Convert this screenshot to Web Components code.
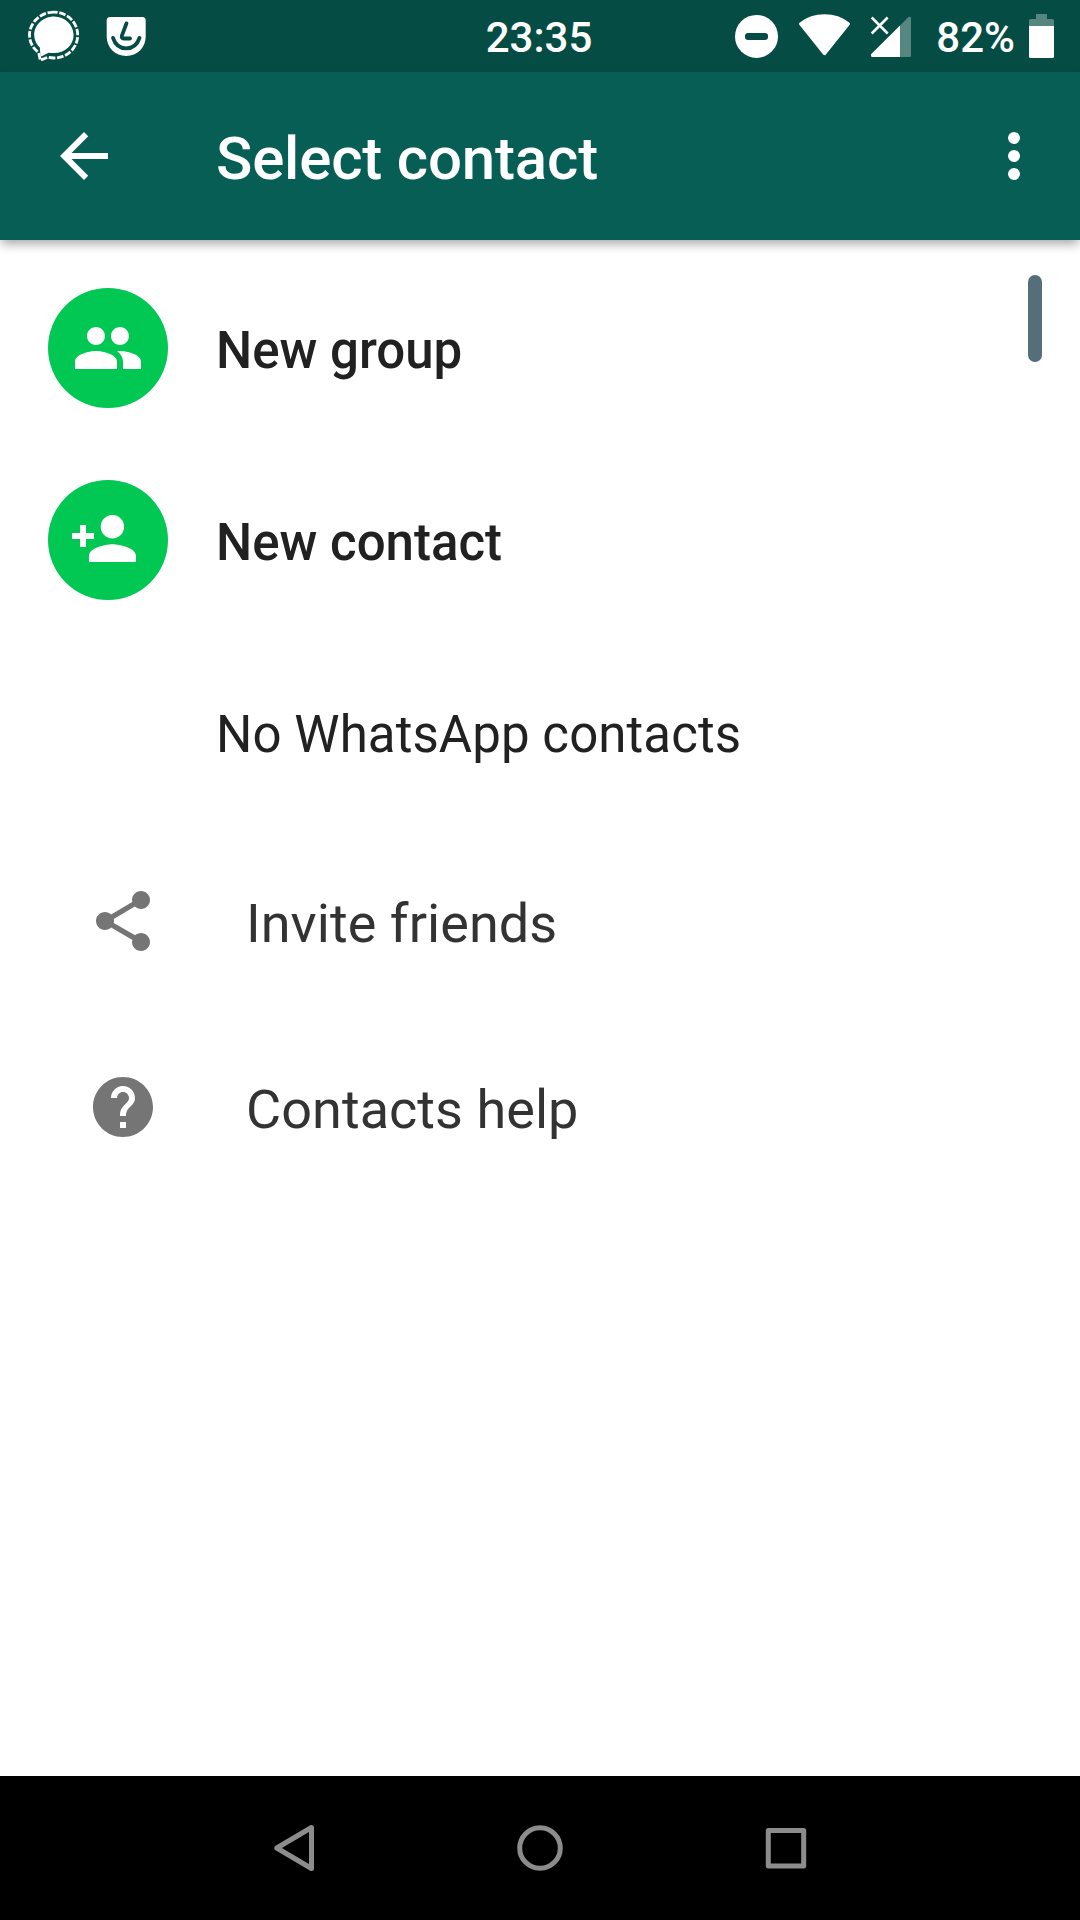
<!DOCTYPE html>
<html lang="en">
<head>
<meta charset="utf-8">
<title>Select contact</title>
<style>
html, body { margin: 0; padding: 0; background: #fff; }
body { font-family: Roboto, "Noto Sans", sans-serif; width: 1080px; height: 1920px; overflow: hidden; }
</style>
</head>
<body>
<phone-screen>
  <status-bar slot="status" time="23:35" battery="82%"></status-bar>
  <app-bar slot="appbar">Select contact</app-bar>
  <contact-action icon="group">New group</contact-action>
  <contact-action icon="person-add">New contact</contact-action>
  <contact-action plain>No WhatsApp contacts</contact-action>
  <link-row icon="share">Invite friends</link-row>
  <link-row icon="help">Contacts help</link-row>
  <nav-bar slot="nav"></nav-bar>
</phone-screen>
<script>
const define = (name, html) => customElements.define(name, class extends HTMLElement {
  connectedCallback() {
    if (this.shadowRoot) return;
    const t = document.createElement('template');
    t.innerHTML = typeof html === 'function' ? html(this) : html;
    this.attachShadow({ mode: 'open' }).appendChild(t.content.cloneNode(true));
  }
});

define('phone-screen', `
<style>
:host { display: flex; flex-direction: column; width: 1080px; height: 1920px; background: #fff; }
main { flex: 1; position: relative; padding-top: 12px; box-sizing: border-box; }
.thumb { position: absolute; top: 35px; right: 38px; width: 14px; height: 87px; border-radius: 7px; background: #546e7a; }
</style>
<slot name="status"></slot>
<slot name="appbar"></slot>
<main><slot></slot><div class="thumb"></div></main>
<slot name="nav"></slot>`);

define('status-bar', el => `
<style>
:host { display: grid; grid-template-columns: 1fr auto 1fr; height: 72px; background: #054d44; color: #fff; font-size: 42px; font-weight: 500; }
.side { display: flex; align-items: flex-start; }
.right { justify-content: flex-end; }
svg { display: block; flex: none; }
.t { line-height: 72px; padding-top: 1.5px; height: 70px; white-space: nowrap; }
.time { padding-right: 2px; }
.pct { margin-left: 23px; margin-right: 14px; }
</style>
<div class="side">
  <svg width="160" height="72" viewBox="0 -0.7 160 72">
    <path fill="#fff" d="M54 15.700c-11 0-19.800 8.300-19.800 18.600 0 5.300 2.300 9.400 5.600 12.600.5 2.900.2 5.500 .9 8.900 3-.9 5-2.500 7.900-3.700 1.800.2 3.600.3 5.400.3 11 0 19.600-8 19.600-18.100S65 15.700 54 15.700z"/>
    <path fill="none" stroke="#fff" stroke-width="2.800" stroke-dasharray="6.600 1.700" d="M51 11.600a24 23.200 0 0 1 3-.2c13.200 0 23.700 10.300 23.700 23S67.200 57.300 54 57.300c-2.200 0-4.300-.2-6.200-.8L40.200 59.500 38.800 51.900C33 47.700 29.500 41.500 29.500 34.400 29.500 22.800 39 13 51 11.600"/>
    <path fill="#fff" d="M110 16.300h32.400c2.200 0 3.300 1.300 3.300 3.300v16.200c0 11-8.500 19.500-19.500 19.500s-19.500-8.500-19.500-19.500V19.600c0-2 1.100-3.300 3.300-3.300z"/>
    <path fill="none" stroke="#054d44" stroke-width="3.800" stroke-linecap="round" stroke-linejoin="round" d="M126.500 22.700l-4.600 12.300c-.5 1.800.2 2.800 1.800 2.800h6.300M113 37.200c2.200 7 7 10.500 13.200 10.500s11-3.500 13.300-10.500"/>
  </svg>
</div>
<div class="t time">${el.getAttribute('time')}</div>
<div class="side right">
  <svg width="178" height="72" viewBox="735 0 178 72">
    <circle cx="756.500" cy="36.400" r="21.500" fill="#fff"/>
    <rect x="745" y="33" width="23" height="7" rx="3" fill="#054d44"/>
    <path fill="#fff" stroke="#fff" stroke-width="3" stroke-linejoin="round" d="M800.500 23.800C814 13 835 13 848.500 23.800L824.500 53.700z"/>
    <path fill="#fff" fill-opacity=".32" d="M900 25.500l8.200-8.200c1.200-1 2.800-.5 2.800 1.200V55.500a1.500 1.500 0 0 1-1.500 1.500H900z"/>
    <path fill="#fff" d="M900 25.500V57H872.500a1.500 1.500 0 0 1-1.500-1.500v-1.300z"/>
    <path stroke="#fff" stroke-width="2.500" d="M871.700 17.500l16 16M887.700 17.500l-16 16"/>
  </svg>
  <div class="t pct">${el.getAttribute('battery')}</div>
  <svg width="51" height="72" viewBox="1029 0 51 72">
    <path fill="#fff" fill-opacity=".32" d="M1029 26v-5.500a1.500 1.500 0 0 1 1.500-1.500h5.500v-5h11v5h5.500a1.500 1.500 0 0 1 1.500 1.500V26z"/>
    <path fill="#fff" d="M1029 26h25v30.500a1.500 1.500 0 0 1-1.500 1.500h-22a1.500 1.500 0 0 1-1.500-1.500z"/>
  </svg>
</div>`);

define('app-bar', `
<style>
:host { display: flex; align-items: center; box-sizing: border-box; height: 168px; padding: 0 30px 0 48px; background: #075e54; color: #fff; position: relative; z-index: 1; box-shadow: 0 5px 10px -1px rgba(0,0,0,.34); }
svg { display: block; width: 72px; height: 72px; fill: #fff; flex: none; }
h1 { flex: 1; margin: 0 0 0 96px; padding-top: 5px; font-size: 60px; font-weight: 500; letter-spacing: -.18px; line-height: 72px; white-space: nowrap; }
</style>
<svg viewBox="0 0 24 24"><path d="M20 11H7.830l5.590-5.590L12 4l-8 8 8 8 1.410-1.410L7.830 13H20v-2z"/></svg>
<h1><slot></slot></h1>
<svg viewBox="0 0 24 24"><circle cx="12" cy="6" r="2"/><circle cx="12" cy="12" r="2"/><circle cx="12" cy="18" r="2"/></svg>`);

const actionIcons = {
  'group': '<g transform="translate(24 24) scale(3)"><path d="M16 11c1.660 0 2.990-1.340 2.990-3S17.660 5 16 5c-1.660 0-3 1.340-3 3s1.340 3 3 3zm-8 0c1.660 0 2.990-1.340 2.990-3S9.660 5 8 5C6.340 5 5 6.340 5 8s1.340 3 3 3zm0 2c-2.330 0-7 1.170-7 3.500V19h14v-2.500c0-2.330-4.670-3.500-7-3.500zm8 0c-.29 0-.62.02-.97.05 1.160.84 1.970 1.970 1.970 3.450V19h6v-2.500c0-2.330-4.670-3.500-7-3.500z"/></g>',
  'person-add': '<circle cx="64.400" cy="46.700" r="11.700"/><path d="M64.400 64.300c-7.800 0-23.400 3.900-23.400 11.700v6h47v-6c0-7.800-15.700-11.700-23.600-11.700zM32 45h6v8h8v6h-8v8h-6v-8h-8v-6h8z"/>'
};
define('contact-action', el => `
<style>
:host { display: flex; align-items: center; gap: 48px; height: 192px; padding-left: 48px; color: #212121; font-size: 51px; font-weight: 500; }
:host([plain]) { font-weight: 400; letter-spacing: .08px; }
svg, .blank { display: block; width: 120px; height: 120px; flex: none; }
svg { border-radius: 50%; background: #00c853; fill: #fff; }
.label { padding-top: 5px; line-height: 64px; white-space: nowrap; }
</style>
${el.hasAttribute('plain') ? '<span class="blank"></span>' : `<svg viewBox="0 0 120 120">${actionIcons[el.getAttribute('icon')]}</svg>`}
<span class="label"><slot></slot></span>`);

const linkIcons = {
  share: '<path d="M18 16c-.76 0-1.440.3-1.960.77L8.910 12.700c.05-.23.09-.46.09-.7s-.04-.47-.09-.7l7.050-4.110c.54.5 1.250.81 2.040.81 1.660 0 3-1.340 3-3s-1.340-3-3-3-3 1.340-3 3c0 .24.04.47.09.7L8.040 9.810C7.500 9.310 6.790 9 6 9c-1.660 0-3 1.340-3 3s1.340 3 3 3c.79 0 1.500-.31 2.040-.81l7.120 4.160c-.05.21-.16.43-.16.65 0 1.660 1.340 3 3 3s3-1.340 3-3-1.340-3-3-3z"/>',
  help: '<path d="M12 2C6.480 2 2 6.480 2 12s4.480 10 10 10 10-4.480 10-10S17.520 2 12 2zm1 17h-2v-2h2v2zm2.070-7.750l-.9.920C13.450 12.900 13 13.500 13 15h-2v-.5c0-1.100.45-2.100 1.170-2.830l1.240-1.260c.37-.36.59-.86.59-1.410 0-1.100-.9-2-2-2s-2 .9-2 2H8c0-2.210 1.790-4 4-4s4 1.790 4 4c0 .88-.36 1.680-.93 2.250z"/>'
};
define('link-row', el => `
<style>
:host { display: flex; align-items: center; gap: 87px; height: 186px; padding-left: 87px; color: #333; font-size: 54px; font-weight: 400; letter-spacing: .05px; }
svg { display: block; width: 72px; height: 72px; flex: none; fill: #757575; }
.label { padding-top: 5px; line-height: 64px; white-space: nowrap; }
</style>
<svg viewBox="0 0 24 24">${linkIcons[el.getAttribute('icon')]}</svg>
<span class="label"><slot></slot></span>`);

define('nav-bar', `
<style>
:host { display: flex; justify-content: center; align-items: center; gap: 174px; height: 144px; background: #000; }
svg { display: block; width: 72px; height: 72px; fill: none; stroke: #8c8c8c; stroke-width: 5; stroke-linejoin: round; }
</style>
<svg viewBox="0 0 72 72"><path d="M18.800 36L53.500 15.500v41z"/></svg>
<svg viewBox="0 0 72 72"><circle cx="36" cy="36" r="20.300"/></svg>
<svg viewBox="0 0 72 72"><rect x="18.300" y="18.500" width="35.400" height="35.400"/></svg>`);
</script>
</body>
</html>
